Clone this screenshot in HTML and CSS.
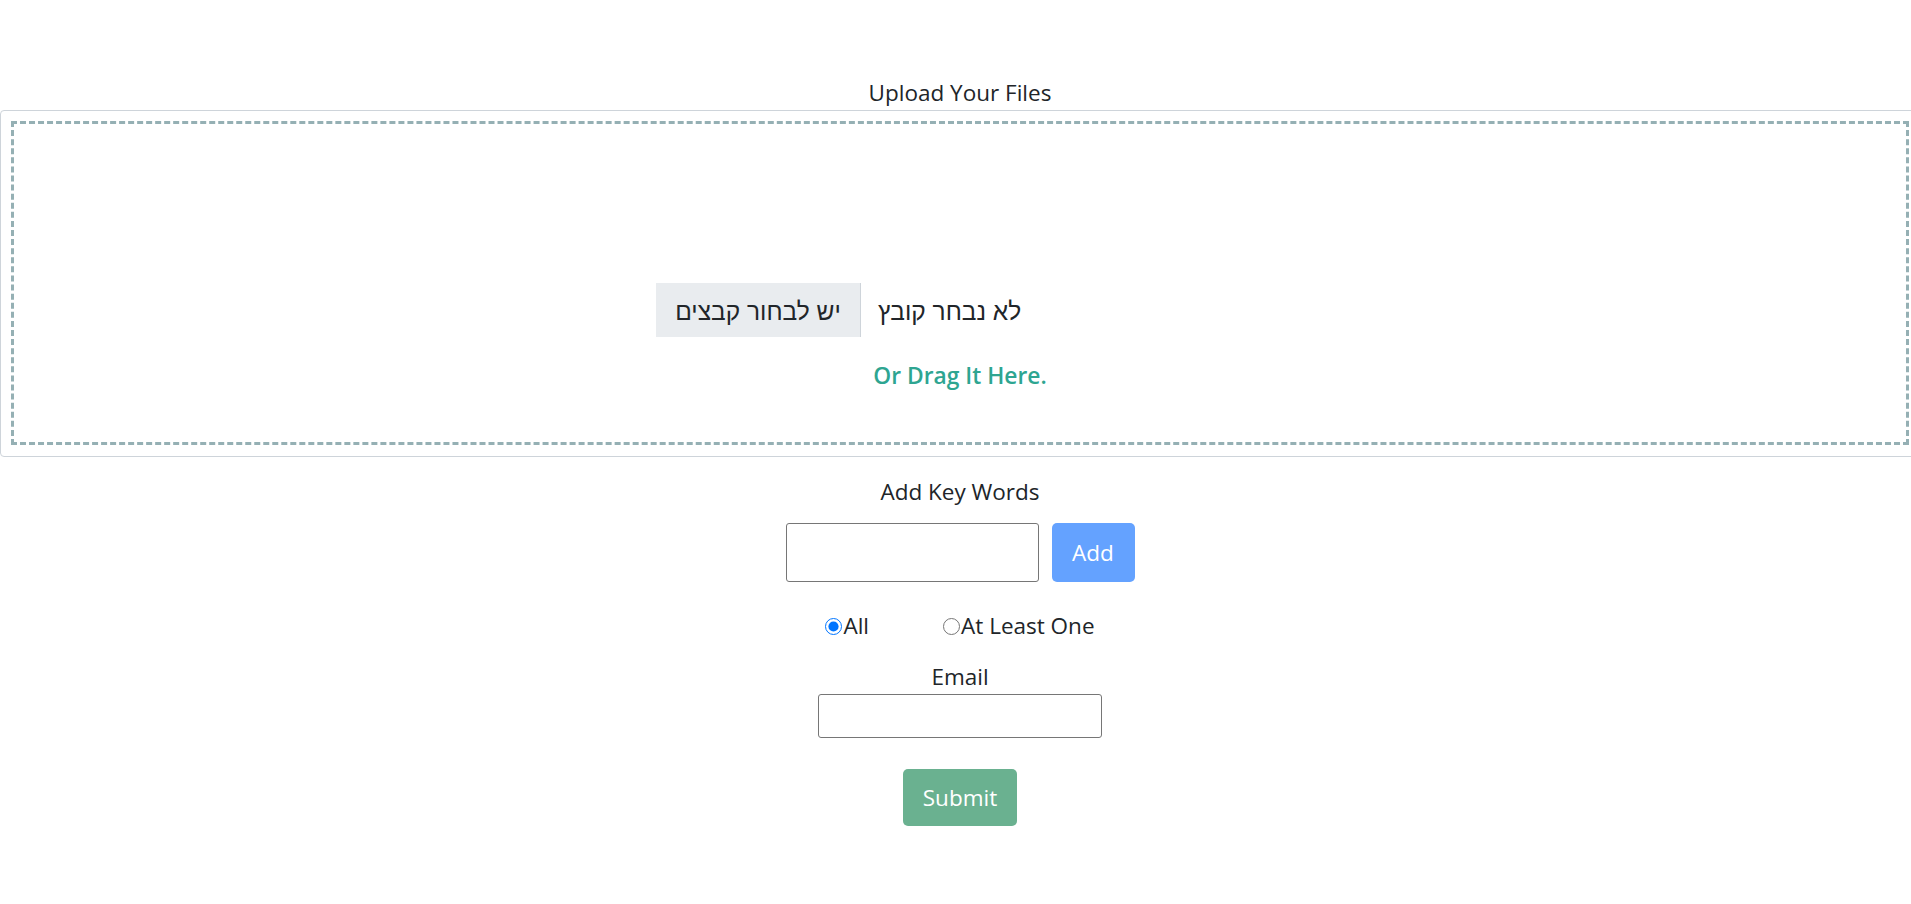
FILE: index.html
```html
<!DOCTYPE html>
<html lang="en">
<head>
<meta charset="utf-8">
<title>Upload</title>
<link rel="stylesheet" href="styles.css">
</head>
<body>
<div class="page">
  <div class="label upload-label">Upload Your Files</div>
  <div class="upload-box">
    <div class="dropzone">
      <div class="file-row">
        <span class="file-btn">יש לבחור קבצים</span>
        <span class="file-status">לא נבחר קובץ</span>
      </div>
      <div class="drag-text">Or Drag It Here.</div>
    </div>
  </div>
  <div class="label kw-label">Add Key Words</div>
  <div class="kw-row">
    <input class="kw-input" type="text">
    <button class="btn btn-add" type="button">Add</button>
  </div>
  <div class="radio-row">
    <label class="radio-opt"><input type="radio" name="mode" checked>All</label>
    <label class="radio-opt second"><input type="radio" name="mode">At Least One</label>
  </div>
  <div class="label email-label">Email</div>
  <input class="email-input" type="email">
  <button class="btn btn-submit" type="button">Submit</button>
</div>
</body>
</html>
```

FILE: styles.css
```css
html, body {
  margin: 0;
  padding: 0;
  overflow: hidden;
  background: #fff;
}
body {
  font-family: "Open Sans", "Liberation Sans", sans-serif;
  color: #212529;
  font-size: 22.5px;
}
.page {
  width: 1920px;
  display: flex;
  flex-direction: column;
  align-items: center;
  padding-top: 77px;
}
.label {
  line-height: 32px;
  font-size: 22.5px;
}
.upload-label {
  margin-bottom: 1px;
}
.upload-box {
  align-self: stretch;
  height: 345px;
  border: 1px solid #ced4da;
  border-radius: 4px;
  display: flex;
}
.dropzone {
  flex: 1;
  margin: 10px 10px 11px 10px;
  border: 3px dashed #95b0b4;
  display: flex;
  flex-direction: column;
}
.file-row {
  margin-top: 159px;
  padding-left: 642px;
  display: flex;
  align-items: center;
  gap: 17px;
  font-family: "Liberation Sans", "DejaVu Sans", sans-serif;
  font-size: 24.5px;
}
.file-btn {
  display: flex;
  align-items: center;
  justify-content: center;
  box-sizing: border-box;
  width: 205px;
  height: 54px;
  padding-top: 3px;
  background: #e9ecef;
  border-right: 1px solid #ced4da;
}
.file-status {
  padding-top: 3px;
}
.drag-text {
  margin-top: 23px;
  text-align: center;
  color: #2ea591;
  font-weight: 600;
  font-size: 22.8px;
  line-height: 32px;
}
.kw-label {
  margin-top: 19px;
}
.kw-row {
  margin-top: 15px;
  display: flex;
  gap: 13px;
}
.kw-input {
  width: 253px;
  height: 59px;
  box-sizing: border-box;
  border: 1px solid #767676;
  border-radius: 3px;
  margin: 0;
}
.btn {
  border: none;
  color: #fff;
  font-family: "Open Sans", "Liberation Sans", sans-serif;
  font-size: 22.5px;
  border-radius: 5px;
  margin: 0;
  padding: 0;
}
.btn-add {
  width: 83px;
  height: 59px;
  background: #64a2ff;
}
.radio-row {
  margin-top: 28px;
  display: flex;
  line-height: 32px;
  font-size: 22.5px;
}
.radio-opt {
  display: flex;
  align-items: center;
}
.radio-opt input {
  width: 17px;
  height: 17px;
  margin: 0 1px 0 0;
}
.radio-opt.second {
  margin-left: 74px;
}
.email-label {
  margin-top: 19px;
}
.email-input {
  margin-top: 1px;
  width: 284px;
  height: 44px;
  box-sizing: border-box;
  border: 1px solid #767676;
  border-radius: 3px;
}
.btn-submit {
  margin-top: 31px;
  width: 114px;
  height: 57px;
  background: #6ab190;
}
```
